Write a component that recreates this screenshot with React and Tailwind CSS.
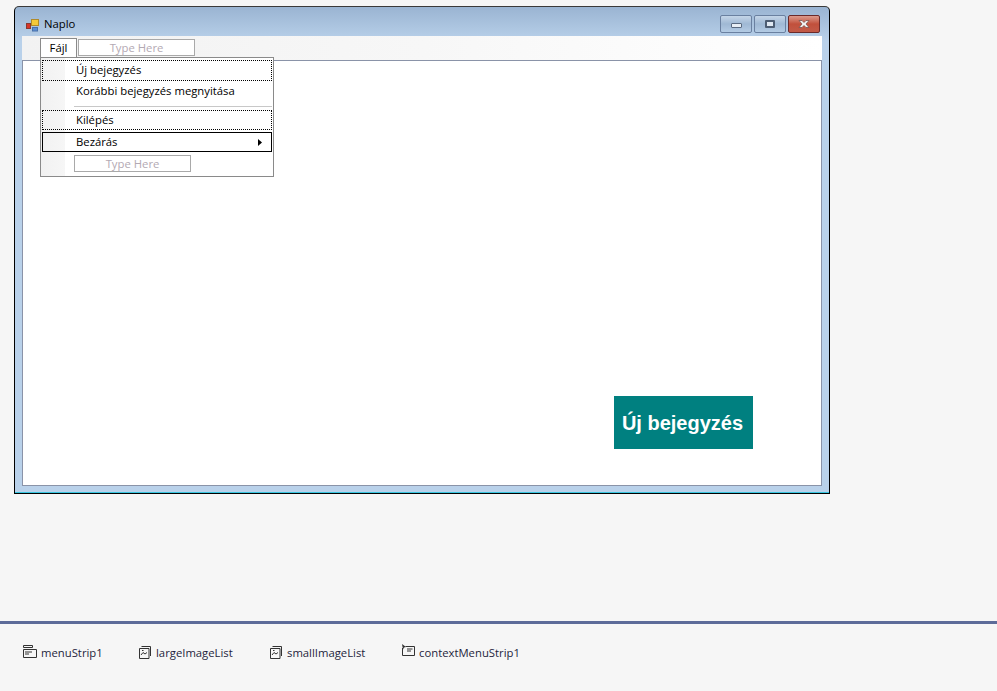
const uiFont = "font-['Open_Sans','Noto_Sans',sans-serif]";

function AppIcon() {
  return (
    <svg width="14" height="14" viewBox="0 0 14 14" className="shrink-0">
      <rect x="0.5" y="5.5" width="4" height="5" fill="#d8352a" stroke="#8a3a30" />
      <rect x="5.5" y="1.5" width="7" height="6" fill="#f5c93a" stroke="#b08a2a" />
      <rect x="6.5" y="9.5" width="5" height="3.5" fill="#5b8fd8" stroke="#4a70a8" />
    </svg>
  );
}

function CaptionButton({ children, close }) {
  return (
    <div
      className={
        close
          ? "w-[32px] h-[18px] flex items-center justify-center rounded-[2px] border border-[#6b2a2a] bg-gradient-to-b from-[#dc9a8c] via-[#c1503c] to-[#c25a48]"
          : "w-[32px] h-[18px] flex items-center justify-center rounded-[2px] border border-[#6a80a0] bg-gradient-to-b from-[#c4d5e8] via-[#9fb8d4] to-[#b3cbe4]"
      }
    >
      {children}
    </div>
  );
}

function TypeHere({ className }) {
  return (
    <div className={"h-[17px] border border-[#a9a9a9] bg-white flex items-center justify-center text-[11.3px] leading-none text-[#b3a9b3] " + className}>
      Type Here
    </div>
  );
}

function MenuItem({ label, border, arrow }) {
  return (
    <div className={"pl-[33px] pr-[9px] flex items-center justify-between text-[11.3px] text-black bg-transparent " + border}>
      <span>{label}</span>
      {arrow && (
        <svg width="4" height="7" viewBox="0 0 4 7">
          <path d="M0 0 L4 3.5 L0 7 Z" fill="#000" />
        </svg>
      )}
    </div>
  );
}

function DropMenu() {
  return (
    <div className="absolute left-[17px] top-[-4px] w-[234px] h-[120px] border border-[#8a8a8a] bg-white bg-[linear-gradient(to_right,#f1f1f1_0,#f6f6f6_24px,#ffffff_24px)] pt-[2px] px-[1px]">
      <MenuItem label="Új bejegyzés" border="h-[21px] border border-dotted border-black" />
      <div className="h-[21px] pl-[34px] flex items-center text-[11.3px] text-black">Korábbi bejegyzés megnyitása</div>
      <div className="h-[8px] ml-[32px] flex items-center">
        <div className="h-px w-full bg-[#c8c8c8]" />
      </div>
      <MenuItem label="Kilépés" border="h-[20px] border border-dotted border-black" />
      <div className="h-[2px]" />
      <MenuItem label="Bezárás" border="h-[20px] border border-black" arrow />
      <div className="pl-[32px] pt-[3px]">
        <TypeHere className="w-[117px]" />
      </div>
    </div>
  );
}

function TrayItem({ icon, label, className }) {
  return (
    <div className={"flex items-center " + className}>
      {icon}
      <span className="text-[11.3px] text-[#1e1e3c]">{label}</span>
    </div>
  );
}

function MenuStripIcon() {
  return (
    <svg width="14" height="14" viewBox="0 0 14 14" fill="none" stroke="#333" className="mb-[3px]">
      <path d="M0.5 0.5H9.5V2.5H0.5Z" />
      <path d="M0.5 4.5H13.5V12.5H0.5Z" />
      <path d="M2 7H9M2 9H6" />
    </svg>
  );
}

function ImageListIcon() {
  return (
    <svg width="12" height="13" viewBox="0 0 12 13" fill="none" stroke="#333" className="mb-[3px]">
      <path d="M2.5 0.5H11.5V10" />
      <path d="M0.5 2.5H10V12.5H0.5Z" />
      <path d="M2 9L4 6.5L6 8L8 6.5" />
      <path d="M3 4.5H4.5" />
    </svg>
  );
}

function ContextIcon() {
  return (
    <svg width="13" height="14" viewBox="0 0 13 14" fill="none" stroke="#333" className="mb-[5px]">
      <path d="M3.5 2.5H12.5V11.5H0.5V4" />
      <path d="M5 5H10.5M5 7H9" />
      <path d="M0 0L4 3L2 3.5L1 5.5Z" fill="#333" stroke="none" />
    </svg>
  );
}

export default function App() {
  return (
    <div className={"w-[997px] h-[691px] overflow-hidden bg-[#f6f6f6] flex flex-col " + uiFont}>
      <div className="flex-1 pl-[14px] pt-[6px]">
        {/* form window */}
        <div className="w-[816px] h-[488px] flex flex-col rounded-t-[5px] border border-black border-t-[#3a3a3a] bg-gradient-to-b from-[#9ab4d2] from-0% via-[#b9d1ea] via-[7%] to-[#b9d1ea] shadow-[inset_0_-1px_0_#39c6e0]">
          <div className="h-[29px] shrink-0 flex items-center pt-[6px] pl-[11px] pr-[9px]">
            <AppIcon />
            <span className="ml-[4px] text-[11.3px] text-black">Naplo</span>
            <div className="ml-auto flex gap-[2px] mb-[2px]">
              <CaptionButton>
                <div className="w-[11px] h-[5px] mt-[4px] bg-[#e8eef5] border border-[#5a6a80] rounded-[1px]" />
              </CaptionButton>
              <CaptionButton>
                <div className="w-[10px] h-[8px] bg-[#dfe8f2] border-2 border-[#4c5c72] rounded-[1px]" />
              </CaptionButton>
              <CaptionButton close>
                <svg width="12" height="8" viewBox="0 0 12 8">
                  <path d="M1 0.5H4L6 2.5L8 0.5H11L8 4L11 7.5H8L6 5.5L4 7.5H1L4 4Z" fill="#f2f2f2" stroke="#6e4a4a" strokeWidth="0.7" />
                </svg>
              </CaptionButton>
            </div>
          </div>

          <div className="mx-[7px] h-[24px] shrink-0 flex items-start pl-[18px] pt-[2px] bg-gradient-to-r from-[#f2f2f2] via-[#f7f7f7] to-white">
            <div className="w-[37px] h-[20px] border border-b-0 border-[#8a8a8a] bg-white flex items-center justify-center text-[11.3px] text-black">Fájl</div>
            <TypeHere className="w-[117px] ml-[1px] mt-[1px]" />
          </div>

          <div className="relative mx-[7px] h-[426px] shrink-0 border border-[#8a93a8] bg-white flex items-end justify-end pr-[68px] pb-[36px]">
            <DropMenu />
            <button className="w-[139px] h-[53px] pr-[2px] bg-[#008080] text-white text-[20px] font-bold font-['Liberation_Sans',sans-serif]">
              Új bejegyzés
            </button>
          </div>
        </div>
      </div>

      {/* component tray */}
      <div className="h-[70px] shrink-0 border-t-[3px] border-[#5d6b99] flex items-center pl-[23px] pb-[8px]">
        <TrayItem icon={<MenuStripIcon />} label="menuStrip1" className="w-[116px] gap-[4px]" />
        <TrayItem icon={<ImageListIcon />} label="largeImageList" className="w-[131px] gap-[5px]" />
        <TrayItem icon={<ImageListIcon />} label="smallImageList" className="w-[132px] gap-[5px]" />
        <TrayItem icon={<ContextIcon />} label="contextMenuStrip1" className="gap-[4px]" />
      </div>
    </div>
  );
}
